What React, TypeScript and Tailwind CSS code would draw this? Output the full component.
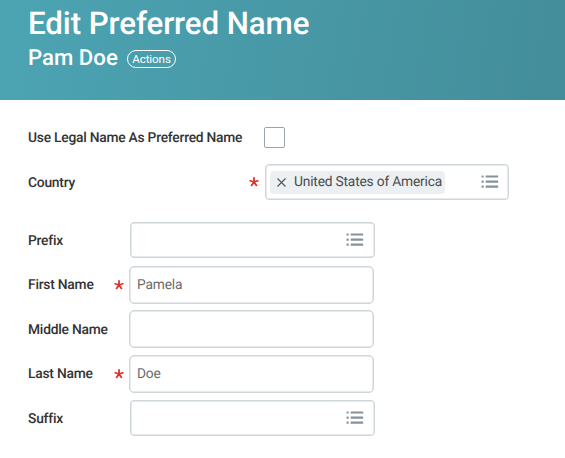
import React from 'react';

function ListIcon() {
  return (
    <svg width="18" height="14" viewBox="0 0 18 14" fill="#84929c" aria-hidden="true">
      {[0.4, 5.5, 10.6].map((y) => (
        <g key={y}>
          <rect x="0.5" y={y} width="2.2" height="2.2" rx="0.5" />
          <rect x="4.6" y={y} width="12.6" height="2.2" rx="0.4" />
        </g>
      ))}
    </svg>
  );
}

function Required() {
  return (
    <svg width="10" height="10" viewBox="0 0 10 10" stroke="#e0302c" strokeWidth="1.8" fill="none" aria-label="required">
      <path d="M5 5V0.2M5 5L0.5 3.5M5 5L9.5 3.5M5 5L2.2 9.1M5 5L7.8 9.1" />
    </svg>
  );
}

type FieldProps = { label: string; value?: string; required?: boolean; prompt?: boolean };

function Field({ label, value, required, prompt }: FieldProps) {
  return (
    <div className="flex h-[44.5px] items-center">
      <label className="w-[86px] whitespace-nowrap pt-[2px] text-[13.8px] font-medium tracking-[-0.22px] text-[#333]">{label}</label>
      <div className="flex w-[15px] items-center">{required && <Required />}</div>
      {prompt ? (
        <div className="ml-px flex h-9 w-[245px] items-center justify-end rounded-[4px] border-[1.5px] border-[#ced6da] pr-2.5 shadow-[inset_0_0_0_0.5px_#ced6da]">
          <ListIcon />
        </div>
      ) : (
        <div className="flex h-[38px] w-[245px] items-center rounded-[5px] border-[1.5px] border-[#ced6da] px-[7px] pt-[2px] text-[13.8px] tracking-[-0.2px] text-[#6c6c6c] shadow-[inset_0_0_0_0.5px_#ced6da]">
          {value}
        </div>
      )}
    </div>
  );
}

export default function App() {
  return (
    <main className="h-[458px] w-[565px] overflow-hidden bg-white font-[Roboto,sans-serif] [text-rendering:geometricPrecision]">
      <header className="h-[100px] bg-[linear-gradient(100deg,#4ca4b3_0%,#448d9a_100%)] pl-7 pt-[5px] text-white">
        <h1 className="text-[31.3px] font-medium leading-[38px] tracking-[-0.1px]">Edit Preferred Name</h1>
        <div className="flex items-center gap-[9px]">
          <h2 className="w-[90px] whitespace-nowrap text-[22.2px] font-medium leading-[31px]">Pam Doe</h2>
          <button className="mt-px h-[18px] w-[49px] rounded-full border border-white text-[11.6px] leading-4 tracking-[-0.1px]">Actions</button>
        </div>
      </header>
      <form className="pl-7 pt-[21px]">
        <div className="flex h-8 items-center">
          <label className="w-[236px] whitespace-nowrap pt-[3px] text-[13.8px] font-medium tracking-[-0.23px] text-[#333]">Use Legal Name As Preferred Name</label>
          <div className="size-[21px] rounded-[2px] border border-[#98a4ae]" />
        </div>
        <div className="mt-[7px] flex h-[44px] items-center">
          <label className="w-[221px] pt-[2px] text-[13.8px] font-medium tracking-[-0.22px] text-[#333]">Country</label>
          <div className="flex w-[16px] items-center"><Required /></div>
          <div className="flex h-9 w-[244px] items-center justify-between rounded-[4px] border-[1.5px] border-[#ced6da] pl-[4px] pr-[9px] shadow-[inset_0_0_0_0.5px_#ced6da]">
            <div className="flex h-[23px] w-[175px] items-center gap-[8px] rounded-[4px] bg-[#edf0f2] pl-[7px] text-[13.8px] tracking-[-0.2px] text-[#4c4c4c]">
              <svg width="9" height="9" viewBox="0 0 9 9" stroke="#555" strokeWidth="1.1" className="shrink-0">
                <path d="M0.5 0.5L8.5 8.5M8.5 0.5L0.5 8.5" />
              </svg>
              <span className="whitespace-nowrap">United States of America</span>
            </div>
            <ListIcon />
          </div>
        </div>
        <div className="mt-[14px]">
          <Field label="Prefix" prompt />
          <Field label="First Name" value="Pamela" required />
          <Field label="Middle Name" />
          <Field label="Last Name" value="Doe" required />
          <Field label="Suffix" prompt />
        </div>
      </form>
    </main>
  );
}
